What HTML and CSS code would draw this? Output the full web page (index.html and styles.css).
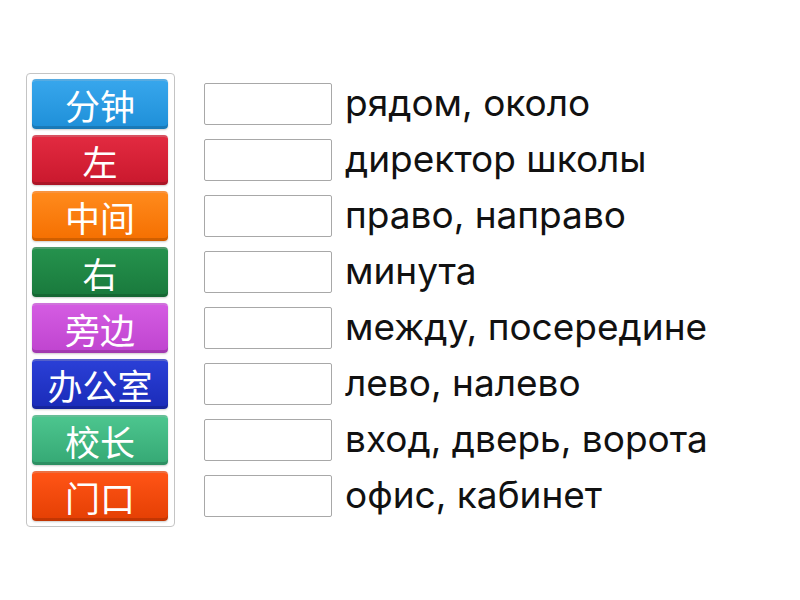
FILE: index.html
```html
<!DOCTYPE html>
<html lang="ru">
<head>
<meta charset="utf-8">
<link rel="stylesheet" href="styles.css">
</head>
<body>
<div class="page">
  <div class="bank">
    <div class="tile c1">分钟</div>
    <div class="tile c2">左</div>
    <div class="tile c3">中间</div>
    <div class="tile c4">右</div>
    <div class="tile c5">旁边</div>
    <div class="tile c6">办公室</div>
    <div class="tile c7">校长</div>
    <div class="tile c8">门口</div>
  </div>
  <div class="rows">
    <div class="row"><div class="slot"></div><span class="def">рядом, около</span></div>
    <div class="row"><div class="slot"></div><span class="def">директор школы</span></div>
    <div class="row"><div class="slot"></div><span class="def">право, направо</span></div>
    <div class="row"><div class="slot"></div><span class="def">минута</span></div>
    <div class="row"><div class="slot"></div><span class="def">между, посередине</span></div>
    <div class="row"><div class="slot"></div><span class="def">лево, налево</span></div>
    <div class="row"><div class="slot"></div><span class="def">вход, дверь, ворота</span></div>
    <div class="row"><div class="slot"></div><span class="def">офис, кабинет</span></div>
  </div>
</div>
</body>
</html>
```
FILE: styles.css
```css
html, body {
  margin: 0;
  padding: 0;
  background: #fff;
}
.page {
  display: flex;
  align-items: flex-start;
  padding: 73px 0 0 26px;
}
.bank {
  display: flex;
  flex-direction: column;
  gap: 6px;
  padding: 5px 6px 5px 5px;
  border: 1px solid #c4c4c4;
  border-radius: 4px;
}
.tile {
  width: 136px;
  height: 50px;
  box-sizing: border-box;
  border-radius: 4px;
  display: flex;
  align-items: center;
  justify-content: center;
  color: #fff;
  font-family: "Noto Sans CJK SC", sans-serif;
  font-size: 35px;
  font-weight: 400;
  line-height: 1;
  padding-bottom: 2px;
  border-top: 2px solid rgba(255,255,255,0.25);
  box-shadow: inset 0 -3px 0 rgba(0,0,0,0.15), 0 1px 2px rgba(0,0,0,0.2);
}
.c1 { background: linear-gradient(#37a6ec, #1e8fd8); }
.c2 { background: linear-gradient(#e22a40, #c9182d); }
.c3 { background: linear-gradient(#ff8a1c, #f56f00); }
.c4 { background: linear-gradient(#25924d, #19793c); }
.c5 { background: linear-gradient(#d45ce2, #bf44cf); }
.c6 { background: linear-gradient(#2a3fd6, #1a2bb8); }
.c7 { background: linear-gradient(#4cc58e, #35a874); }
.c8 { background: linear-gradient(#ff5416, #e43f03); }
.rows {
  display: flex;
  flex-direction: column;
  gap: 6px;
  padding-top: 6px;
  margin-left: 29px;
}
.row {
  height: 50px;
  display: flex;
  align-items: center;
  gap: 13px;
}
.slot {
  width: 128px;
  height: 42px;
  box-sizing: border-box;
  border: 1px solid #a8a8a8;
  border-radius: 2px;
  background: #fff;
}
.def {
  font-family: Inter, Roboto, sans-serif;
  font-size: 37px;
  color: #111;
  white-space: nowrap;
  margin-top: -4px;
}
```
